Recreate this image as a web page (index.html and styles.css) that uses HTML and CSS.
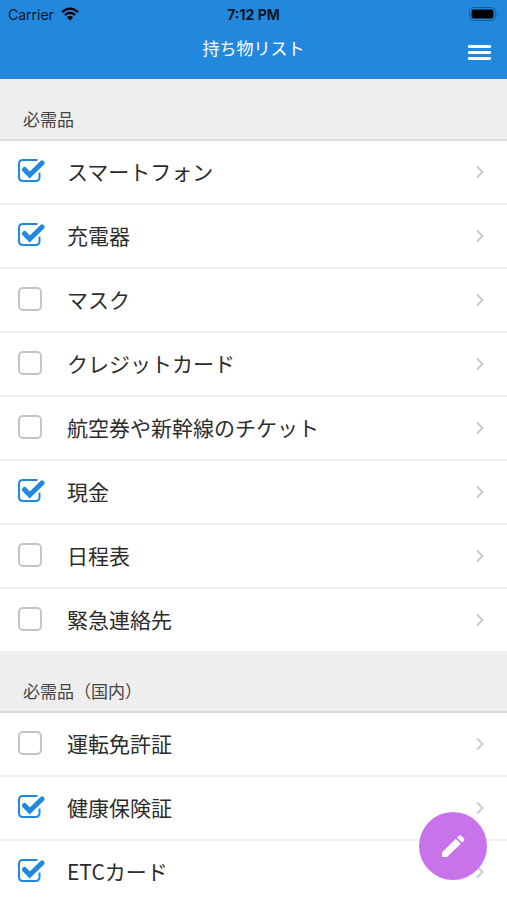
FILE: index.html
```html
<!DOCTYPE html>
<html lang="ja">
<head>
<meta charset="utf-8">
<meta name="viewport" content="width=device-width, initial-scale=1">
<title>持ち物リスト</title>
<link rel="stylesheet" href="styles.css">
</head>
<body>
<svg class="sprite" aria-hidden="true">
  <symbol id="check" viewBox="0 0 28 26">
    <path d="M20.500 2H6Q2 2 2 6v13q0 4 4 4h12.500q4 0 4-4v-4.500" fill="none" stroke="currentColor" stroke-width="2"/>
    <path d="M7.500 11.500l5.200 5.500L25 5" fill="none" stroke="currentColor" stroke-width="5" stroke-linecap="round"/>
  </symbol>
  <symbol id="chevron" viewBox="0 0 8 14">
    <path d="M1 1.500l5.500 5.500L1 12.500" fill="none" stroke="currentColor" stroke-width="1.800"/>
  </symbol>
</svg>

<header class="top">
  <div class="status">
    <span class="carrier">Carrier
      <svg class="wifi" viewBox="0 0 18 14" aria-hidden="true">
        <path d="M1 5.200Q9-2 17 5.200M3.900 8Q9 3.500 14.100 8" fill="none" stroke="currentColor" stroke-width="2.300"/>
        <path d="M9 13.500L5.900 10.200Q9 7.600 12.100 10.200z" fill="currentColor"/>
      </svg>
    </span>
    <span class="clock">7:12 PM</span>
    <svg class="battery" viewBox="0 0 30 14" aria-hidden="true">
      <rect x="0.500" y="0.500" width="26" height="13" rx="4" fill="none" stroke="#175e99"/>
      <rect x="2.500" y="2.500" width="22" height="9" rx="2" fill="#000"/>
      <path d="M28 4.500q2 2.500 0 5z" fill="#175e99"/>
    </svg>
  </div>
  <div class="bar">
    <h1>持ち物リスト</h1>
    <button class="menu" type="button" aria-label="メニュー"><span></span><span></span><span></span></button>
  </div>
</header>

<main>
  <section>
    <h2>必需品</h2>
    <ul>
      <li><label><input type="checkbox" checked><svg class="tick"><use href="#check"/></svg><span>スマートフォン</span></label><svg class="chevron"><use href="#chevron"/></svg></li>
      <li><label><input type="checkbox" checked><svg class="tick"><use href="#check"/></svg><span>充電器</span></label><svg class="chevron"><use href="#chevron"/></svg></li>
      <li><label><input type="checkbox"><svg class="tick"><use href="#check"/></svg><span>マスク</span></label><svg class="chevron"><use href="#chevron"/></svg></li>
      <li><label><input type="checkbox"><svg class="tick"><use href="#check"/></svg><span>クレジットカード</span></label><svg class="chevron"><use href="#chevron"/></svg></li>
      <li><label><input type="checkbox"><svg class="tick"><use href="#check"/></svg><span>航空券や新幹線のチケット</span></label><svg class="chevron"><use href="#chevron"/></svg></li>
      <li><label><input type="checkbox" checked><svg class="tick"><use href="#check"/></svg><span>現金</span></label><svg class="chevron"><use href="#chevron"/></svg></li>
      <li><label><input type="checkbox"><svg class="tick"><use href="#check"/></svg><span>日程表</span></label><svg class="chevron"><use href="#chevron"/></svg></li>
      <li><label><input type="checkbox"><svg class="tick"><use href="#check"/></svg><span>緊急連絡先</span></label><svg class="chevron"><use href="#chevron"/></svg></li>
    </ul>
  </section>
  <section>
    <h2>必需品（国内）</h2>
    <ul>
      <li><label><input type="checkbox"><svg class="tick"><use href="#check"/></svg><span>運転免許証</span></label><svg class="chevron"><use href="#chevron"/></svg></li>
      <li><label><input type="checkbox" checked><svg class="tick"><use href="#check"/></svg><span>健康保険証</span></label><svg class="chevron"><use href="#chevron"/></svg></li>
      <li><label><input type="checkbox" checked><svg class="tick"><use href="#check"/></svg><span>ETCカード</span></label><svg class="chevron"><use href="#chevron"/></svg></li>
    </ul>
  </section>
</main>

<button class="edit" type="button" aria-label="編集">
  <svg viewBox="0 0 24 24" aria-hidden="true">
    <path d="M1 18.500L14.800 4.700l5 5L6 23H2q-1 0-1-1z" fill="#fff"/>
    <path d="M16 3.500l1.800-1.800q1.200-1 2.400 0l2.600 2.600q1 1.200 0 2.400L21 8.500z" fill="#fff"/>
  </svg>
</button>
</body>
</html>
```
FILE: styles.css
```css
* {
  box-sizing: border-box;
}

body {
  margin: 0;
  height: 100vh;
  display: flex;
  flex-direction: column;
  background: #fff;
  color: #2c2c2c;
  font-family: "Noto Sans CJK JP", sans-serif;
}

button {
  border: 0;
  padding: 0;
  cursor: pointer;
}

h1,
h2,
ul {
  margin: 0;
  padding: 0;
  font-weight: 400;
}

.sprite {
  position: absolute;
  width: 0;
  height: 0;
}

.top {
  flex: none;
  background: #2288dd;
}

.status {
  display: grid;
  grid-template-columns: 1fr auto 1fr;
  align-items: center;
  height: 28px;
  padding: 0 8px;
  color: #0b1620;
  font-family: Inter, sans-serif;
  font-size: 14px;
}

.carrier {
  display: flex;
  align-items: center;
  gap: 7px;
}

.wifi {
  width: 18px;
  height: 14px;
  color: #000;
}

.clock {
  font-weight: 700;
}

.battery {
  justify-self: end;
  width: 30px;
  height: 14px;
}

.bar {
  display: grid;
  grid-template-columns: 1fr auto 1fr;
  height: 51px;
  padding: 0 16px;
  color: #fff;
}

h1 {
  grid-column: 2;
  font-size: 17px;
  line-height: 40px;
}

.menu {
  display: flex;
  flex-direction: column;
  justify-self: end;
  align-self: start;
  gap: 3px;
  width: 23px;
  padding-top: 17px;
  background: none;
}

.menu span {
  height: 3px;
  width: 100%;
  border-radius: 1px;
  background: #fff;
}

main {
  flex: 1;
  min-height: 0;
  overflow-y: auto;
  scrollbar-width: none;
}

h2 {
  padding: 28px 23px 8px;
  border-bottom: 2px solid #dcdcdc;
  background: #eee;
  color: #444;
  font-size: 17px;
  line-height: 24px;
}

ul {
  list-style: none;
}

li {
  display: flex;
  align-items: center;
  padding-right: 23px;
  border-bottom: 2px solid #f0f0f0;
}

li:last-child {
  border-bottom: 0;
}

label {
  flex: 1;
  display: grid;
  grid-template-columns: 28px 1fr;
  align-items: center;
  column-gap: 22px;
  padding: 14px 0 16px 17px;
  font-size: 21px;
  line-height: 32px;
}

input,
.tick {
  grid-area: 1 / 1;
}

input {
  appearance: none;
  width: 24px;
  height: 24px;
  margin: 0 1px;
  border: 2px solid #c4c4c4;
  border-radius: 5px;
}

input:checked {
  border-color: transparent;
}

.tick {
  width: 28px;
  height: 26px;
  color: #2288dd;
  visibility: hidden;
}

input:checked + .tick {
  visibility: visible;
}

.chevron {
  width: 8px;
  height: 14px;
  color: #c8c8c8;
}

.edit {
  position: fixed;
  right: 20px;
  bottom: 20px;
  display: grid;
  place-items: center;
  width: 68px;
  height: 68px;
  border-radius: 50%;
  background: #c873ea;
}

.edit svg {
  width: 24px;
  height: 24px;
}
```
